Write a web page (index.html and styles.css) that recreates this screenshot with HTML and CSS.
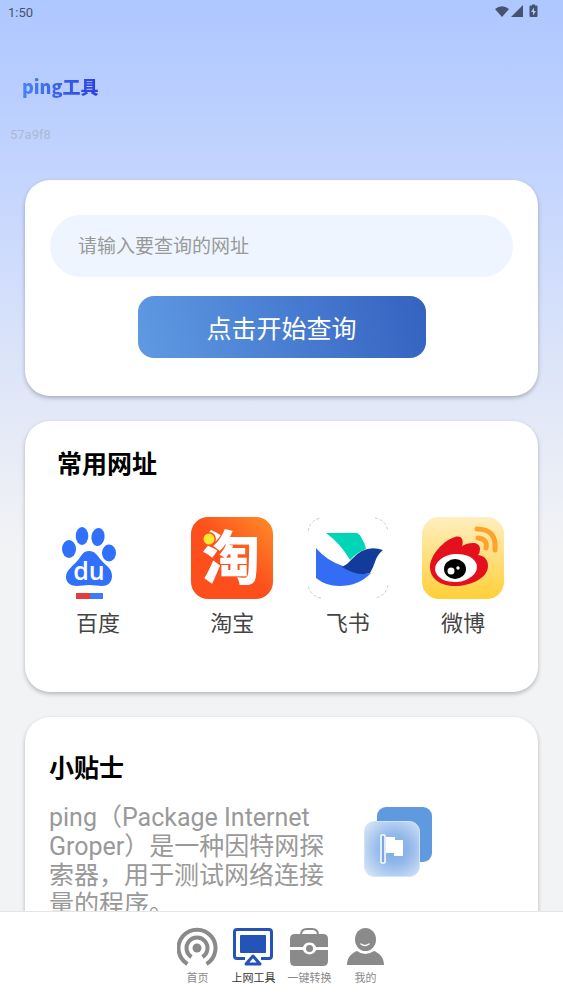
FILE: index.html
```
<!DOCTYPE html>
<html lang="zh-CN">
<head>
    <meta charset="UTF-8">
    <meta name="viewport" content="width=device-width, initial-scale=1.0">
    <title>ping工具</title>
    <link rel="stylesheet" href="styles.css">
</head>
<body>

    <div class="status-bar">
        <span>1:50</span>
        <svg class="status-icons" width="44" height="16" viewBox="0 0 44 16" aria-hidden="true">
            <path d="M0 5Q7 -.5 14 5L7 13z"/>
            <path d="M28 1v12H16z"/>
            <path fill-rule="evenodd" d="M35.500 1.500H37V.5h3v1h1.500q1 0 1 1V12q0 1-1 1h-6q-1 0-1-1V2.500q0-1 1-1zM39 3.500L36 8h2v3.500L41 7h-2z"/>
        </svg>
    </div>

    <main>
        <header>
            <h1>ping工具</h1>
            <p class="device-id">57a9f8</p>
        </header>

        <form class="card search">
            <input type="text" name="url" placeholder="请输入要查询的网址" aria-label="请输入要查询的网址">
            <button type="button">点击开始查询</button>
        </form>

        <section class="card sites">
            <h2>常用网址</h2>
            <div class="site-list">
                <a href="#">
                    <svg width="82" height="82" viewBox="0 0 82 82" aria-hidden="true">
                        <g fill="#3070fa">
                            <ellipse cx="12" cy="32" rx="7" ry="9"/>
                            <ellipse cx="25" cy="19" rx="6.300" ry="9"/>
                            <ellipse cx="41" cy="20" rx="6.600" ry="9" transform="rotate(8 41 20)"/>
                            <ellipse cx="52" cy="36" rx="7" ry="8.500"/>
                            <path d="M32 34c6 0 8 4 12 9 5 6 11 8 11 16 0 7-5 10-10 10-4 0-8-1-13-1s-8 1-12 1C14 69 9 66 9 60c0-7 7-11 12-17 4-5 5-9 11-9z"/>
                        </g>
                        <text class="du" x="32" y="63" text-anchor="middle">du</text>
                        <path fill="#e43b3f" d="M19 76h14v6H19z"/>
                        <path fill="#3e7bfa" d="M33 76h13v6H33z"/>
                    </svg>
                    <span>百度</span>
                </a>
                <a href="#">
                    <svg width="82" height="82" viewBox="0 0 82 82" aria-hidden="true">
                        <defs>
                            <linearGradient id="orange" x1="0" y1="1" x2="1" y2="0">
                                <stop offset=".5" stop-color="#fc4f1c"/>
                                <stop offset="1" stop-color="#ff8d27"/>
                            </linearGradient>
                        </defs>
                        <rect width="82" height="82" rx="17" fill="url(#orange)"/>
                        <text class="tao" x="40" y="62" text-anchor="middle">淘</text>
                        <circle cx="18" cy="22" r="7" fill="#fc501c"/>
                        <circle cx="18" cy="22" r="5.500" fill="#ffe632"/>
                    </svg>
                    <span>淘宝</span>
                </a>
                <a href="#">
                    <svg width="82" height="82" viewBox="0 0 82 82" aria-hidden="true">
                        <path d="M1 14Q3 3 14 1M68 1q11 2 13 13M81 68q-2 11-13 13M14 81Q3 79 1 68" fill="none" stroke="#ccc" stroke-dasharray="3 2"/>
                        <path fill="#00d5b8" d="M19 16h30q3 0 5 4 4 6 5 12-9 3-16 11-9-16-24-27z"/>
                        <path fill="#336df4" d="M9 31q11 13 27 18 14 10 28 7-12 13-32 13-13 0-23-8z"/>
                        <path fill="#133c9a" d="M35 50q6-3 10-8 13-15 31-9-6 5-8 12-2 6-5 11-12 4-28-6z"/>
                    </svg>
                    <span>飞书</span>
                </a>
                <a href="#">
                    <svg width="82" height="82" viewBox="0 0 82 82" aria-hidden="true">
                        <defs>
                            <linearGradient id="yellow" x1="0" y1="0" x2="0" y2="1">
                                <stop offset="0" stop-color="#ffefc0"/>
                                <stop offset="1" stop-color="#ffcf38"/>
                            </linearGradient>
                        </defs>
                        <rect width="82" height="82" rx="17" fill="url(#yellow)"/>
                        <path fill="#e5101d" d="M8 50c0-12 14-27 25-30 7-2 9 4 7 9 7-4 18-5 18 3q0 4-2 6c7 1 10 5 10 11 0 12-17 20-33 20C19 69 8 62 8 50z"/>
                        <ellipse cx="34" cy="51" rx="21" ry="14" fill="#fff" transform="rotate(-5 34 51)"/>
                        <ellipse cx="33" cy="52" rx="11" ry="10"/>
                        <circle cx="29" cy="54" r="3.500" fill="#fff"/>
                        <circle cx="36" cy="51" r="1.700" fill="#fff"/>
                        <g fill="none" stroke="#ffa22b" stroke-width="5" stroke-linecap="round">
                            <path d="M55 12q20 0 18 21"/>
                            <path d="M56 21q10 1 8 10"/>
                        </g>
                    </svg>
                    <span>微博</span>
                </a>
            </div>
        </section>

        <section class="card tips">
            <h2>小贴士</h2>
            <div class="tips-row">
                <p>ping（Package Internet Groper）是一种因特网探索器，用于测试网络连接量的程序。</p>
                <svg width="70" height="72" viewBox="0 0 70 72" aria-hidden="true">
                    <defs>
                        <radialGradient id="glass" cx=".55" cy=".5" r=".7">
                            <stop offset="0" stop-color="#79a7e4"/>
                            <stop offset=".4" stop-color="#94b9ea"/>
                            <stop offset="1" stop-color="#d9e6f8"/>
                        </radialGradient>
                    </defs>
                    <rect x="13" y="1" width="55" height="55" rx="9" fill="#5f99e0"/>
                    <rect x=".5" y="15.500" width="55" height="55" rx="10" fill="url(#glass)" stroke="#d4e3f8"/>
                    <path fill="#fff" d="M22 31h9v3h8v16h-9v-3h-8z"/>
                    <rect x="17" y="29" width="4" height="28" rx="1" fill="#7ba8e4" stroke="#fff" stroke-width="1.500"/>
                </svg>
            </div>
        </section>
    </main>

    <nav>
        <a href="#">
            <svg width="42" height="40" viewBox="0 0 42 40" aria-hidden="true">
                <circle cx="20" cy="21" r="4.500"/>
                <g fill="none" stroke="#8a8a8a" stroke-width="4">
                    <path d="M14.500 30a10.500 10.500 0 1 1 11 0"/>
                    <path d="M10.500 37a18.500 18.500 0 1 1 19 0"/>
                </g>
            </svg>
            <span>首页</span>
        </a>
        <a href="#" class="active">
            <svg width="42" height="40" viewBox="0 0 42 40" aria-hidden="true">
                <g fill="none" stroke="#2553b8" stroke-width="3" stroke-linejoin="round">
                    <path d="M12 31.500H4q-2.500 0-2.500-2.500V5q0-2.500 2.500-2.500h32q2.500 0 2.500 2.500v24q0 2.500-2.500 2.500h-8"/>
                    <path d="M20 29l7 8H13z"/>
                </g>
                <rect x="7" y="8" width="26" height="18" rx="1"/>
            </svg>
            <span>上网工具</span>
        </a>
        <a href="#">
            <svg width="42" height="40" viewBox="0 0 42 40" aria-hidden="true">
                <path d="M12 8q0-6 6-6h5q6 0 6 6" fill="none" stroke="#8a8a8a" stroke-width="2"/>
                <path d="M6 7h28q5 0 5 5v8H27a7 7 0 0 0-13 0H1v-8q0-5 5-5z"/>
                <path d="M1 23h13a7 7 0 0 0 13 0h12v11q0 5-5 5H6q-5 0-5-5z"/>
                <circle cx="20.500" cy="21.500" r="3.500"/>
            </svg>
            <span>一键转换</span>
        </a>
        <a href="#">
            <svg width="42" height="40" viewBox="0 0 42 40" aria-hidden="true">
                <ellipse cx="20.500" cy="12.500" rx="10.500" ry="11.500"/>
                <path d="M2 38c0-8 5-12 10-14q8 6 17 0c5 2 10 6 10 14z"/>
                <path d="M16 17q4 3 8 0" fill="none" stroke="#fff" stroke-width="1.500" stroke-linecap="round"/>
            </svg>
            <span>我的</span>
        </a>
    </nav>

</body>
</html>
```
FILE: styles.css
```
* {
    box-sizing: border-box;
}
body {
    display: flex;
    flex-direction: column;
    height: 100vh;
    margin: 0;
    font-family: Roboto, "Noto Sans CJK SC", sans-serif;
    background: linear-gradient(#aec7ff, #c4d5fe 18%, #e2e8f7 41%, #f2f3f5 55%);
}
h1, h2, p {
    margin: 0;
}
a {
    color: inherit;
    text-decoration: none;
}
.status-bar {
    display: flex;
    flex: none;
    justify-content: space-between;
    align-items: center;
    height: 24px;
    padding: 0 24px 0 8px;
    font-size: 13px;
    color: #46536c;
}
.status-icons {
    fill: #46536c;
}
main {
    flex: 1;
    min-height: 0;
    overflow: hidden;
}
header {
    height: 156px;
    padding: 48px 10px 0;
}
h1 {
    width: max-content;
    margin-left: 12px;
    font-family: "Noto Sans CJK SC", sans-serif;
    font-size: 18px;
    font-weight: 900;
    line-height: 28px;
    color: transparent;
    background: linear-gradient(to right, #4a82f6, #2a3fdf);
    background-clip: text;
}
.device-id {
    margin-top: 27px;
    font-size: 13px;
    line-height: 16px;
    color: #acb9d4;
}
.card {
    margin: 0 25px 25px;
    border-radius: 25px;
    background: #fff;
    box-shadow: 0 2px 4px rgba(0, 0, 0, 0.25);
}
.search {
    display: flex;
    flex-direction: column;
    align-items: center;
    gap: 19px;
    padding: 35px 25px 38px;
}
.search input {
    width: 100%;
    height: 62px;
    padding: 0 28px;
    border: none;
    border-radius: 31px;
    background: #eef5fe;
    font-family: inherit;
    font-size: 19px;
}
.search input::placeholder {
    color: #999;
}
.search button {
    width: 288px;
    height: 62px;
    border: none;
    border-radius: 16px;
    background: linear-gradient(75deg, #5f9ae3, #3462c0);
    font-family: inherit;
    font-size: 25px;
    color: #fff;
}
h2 {
    font-size: 25px;
    line-height: 36px;
    font-weight: bold;
    color: #000;
}
.sites {
    padding: 26px 34px 52px 32px;
}
.site-list {
    display: flex;
    justify-content: space-between;
    margin-top: 34px;
}
.site-list a {
    display: flex;
    flex-direction: column;
    align-items: center;
    gap: 9px;
    font-size: 22px;
    line-height: 32px;
    color: #444;
}
.site-list a:first-child {
    margin-right: 19px;
}
.site-list svg {
    overflow: visible;
}
.du {
    font-family: "Open Sans", sans-serif;
    font-size: 25px;
    font-weight: 600;
    fill: #fff;
}
.tao {
    font-family: "Noto Sans CJK SC", sans-serif;
    font-size: 58px;
    font-weight: 900;
    fill: #fff;
}
.tips {
    padding: 34px 24px;
}
.tips-row {
    display: flex;
    gap: 38px;
    margin-top: 16px;
}
.tips-row p {
    width: 277px;
    font-size: 25px;
    line-height: 29px;
    color: #999;
}
.tips-row svg {
    margin-top: 3px;
}
nav {
    display: flex;
    flex: none;
    justify-content: center;
    height: 89px;
    padding-top: 15px;
    border-top: 1px solid #e5e5e5;
    background: #fff;
}
nav a {
    display: flex;
    flex-direction: column;
    align-items: center;
    gap: 4px;
    width: 56px;
    font-size: 11px;
    line-height: 16px;
    color: #8a8a8a;
    fill: #8a8a8a;
}
nav .active {
    color: #333;
    fill: #2553b8;
}
```
